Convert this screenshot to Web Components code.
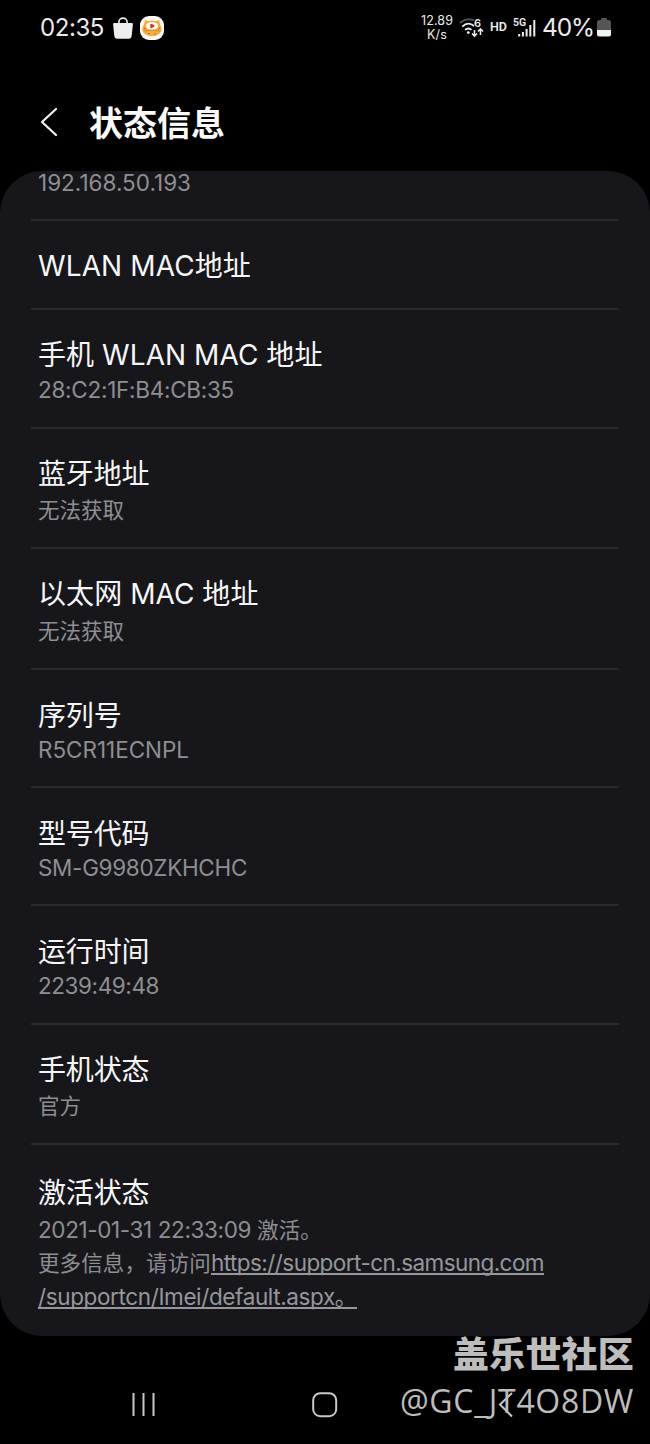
<!DOCTYPE html>
<html lang="zh-CN">
<head>
<meta charset="utf-8">
<title>状态信息</title>
<style>
html,body{margin:0;background:#000}
body{font-family:Inter,"Noto Sans CJK SC",sans-serif;color:#f6f6f8}
</style>
</head>
<body>
<status-screen></status-screen>
<script>
const define=(name,html,ready)=>customElements.define(name,class extends HTMLElement{
  connectedCallback(){
    if(this.shadowRoot)return;
    const t=document.createElement('template');
    t.innerHTML=html;
    this.attachShadow({mode:'open'}).append(t.content.cloneNode(true));
    if(ready)ready(this,this.shadowRoot);
  }
});

/* A run of text tracked out (or in) to the advance width given by its "w" attribute. */
define('fit-text',`<style>:host{display:inline-block;white-space:pre}</style><slot></slot>`,el=>{
  const w=+el.getAttribute('w');
  if(!w)return;
  const n=[...el.textContent].length;
  el.style.letterSpacing=((w-el.getBoundingClientRect().width)/n)+'px';
});

define('status-bar',`<style>
:host{display:flex;height:55px;box-sizing:border-box;padding:0 39px 0 40px;align-items:center;color:#ececec}
.time{font-size:24px;line-height:30px}
.bag{margin-left:9px}.app{margin-left:7px}
.space{flex:1}
.speed{font-size:12.5px;line-height:14px;text-align:center;display:flex;flex-direction:column;align-items:center;margin-right:7px}
.hd{font:600 12.500px/14px Roboto,sans-serif;margin:0 7px 0 5px;position:relative;top:-1px}
.pct{font-size:24.5px;line-height:30px;margin-left:5px;position:relative;top:-1px}
svg{display:block;flex:none;overflow:visible}
.bat{margin-left:3px}
</style>
<fit-text class="time" w="64">02:35</fit-text>
<svg class="bag" width="20" height="22" viewBox="0 0 20 22"><path d="M5.9 7V5.2a4.1 4.1 0 0 1 8.2 0V7" fill="none" stroke="#eee" stroke-width="1.6"/><path d="M1.2 6h17.6q1.2 0 1.1 1.2l-1.2 11.6q-.3 2.9-3.1 2.9H4.400q-2.800 0-3.100-2.900L.1 7.200Q0 6 1.200 6Z" fill="#eee"/></svg>
<svg class="app" width="24" height="24" viewBox="0 0 24 24"><rect width="24" height="24" rx="9" fill="#fffaf0"/><path d="M4 8.500 5 4l3.500 1.200Q12 3.800 15.500 5.200L19 4l1 4.500c2.800 4 2 7.500-1.500 9.800-4 2.500-9 2.500-13 0C2 16 1.200 12.500 4 8.500Z" fill="#f3ad45"/><ellipse cx="12" cy="10" rx="6" ry="4" fill="#fff8ed"/><path d="M10.300 7.800q3.500.3 4.500 2.200-1.500 2-4.500 2.200Z" fill="#b63b32"/><path d="M3.500 15q8.500-1.800 17 0" fill="none" stroke="#dc8a2c" stroke-width="1"/><path d="M4 12l1.500 1M20 12l-1.500 1M8 17.500h1.500M14.500 18H16" stroke="#a75a20" stroke-width="1"/></svg>
<span class="space"></span>
<div class="speed"><fit-text w="32">12.89</fit-text><fit-text w="20">K/s</fit-text></div>
<svg width="25" height="20" viewBox="0 0 25 20" fill="none"><path d="M0 5C4 1.200 9 .6 14 2.200" stroke="#555" stroke-width="1.900"/><path d="M2.200 8.600C6 5 10.500 5 14 8" stroke="#eee" stroke-width="1.800"/><path d="M5 11.900q3.500-2.700 6.500 0" stroke="#eee" stroke-width="1.800"/><circle cx="8.300" cy="14.600" r="1.400" fill="#eee"/><path d="M14.500 12v6M12 15.600l2.500 2.600 2.500-2.600M20.500 17v-6M18 13.400l2.500-2.600 2.500 2.600" stroke="#eee" stroke-width="1.500"/><text x="14" y="9" font-size="11" font-weight="600" fill="#eee">6</text></svg>
<fit-text class="hd" w="17">HD</fit-text>
<svg width="23" height="20" viewBox="0 0 23 20"><text x="-1" y="8" font-family="Roboto" font-size="10.500" font-weight="600" fill="#eee">5G</text><path d="M5.200 16v2.500M8.900 14v4.500M12.600 11v7.500M16.300 7v11.500M20.300 2v16.500" stroke="#eee" stroke-width="2"/></svg>
<fit-text class="pct" w="52">40%</fit-text>
<svg class="bat" width="14" height="19" viewBox="0 0 14 19"><path d="M4 2V1q0-1 1-1h4q1 0 1 1v1h1.500Q14 2 14 4.500V12H0V4.500Q0 2 2.500 2Z" fill="#555"/><path d="M0 12h14v4.500q0 2-2 2H2q-2 0-2-2Z" fill="#f2f2f2"/></svg>`);

define('title-bar',`<style>
:host{display:flex;align-items:center;height:116px;padding:0 0 0 40px;box-sizing:border-box}
svg{display:block;margin-bottom:-17px}
h1{margin:18px 0 0 31px;font:700 34px/44px "Noto Sans CJK SC",sans-serif;color:#fafafa}
</style>
<svg width="18" height="30" viewBox="0 0 18 30"><path d="M16 2 2 15l14 13" fill="none" stroke="#f4f4f4" stroke-width="2.200" stroke-linecap="round" stroke-linejoin="round"/></svg>
<h1><fit-text w="137"><slot></slot></fit-text></h1>`);

define('info-row',`<style>
:host{display:block;box-sizing:border-box;margin:0 31px;padding:var(--top,28px) 0 0 7px;height:var(--h);border-bottom:2px solid #29292d}
:host(:last-child){border:0}
.t{display:block;font-size:28px;line-height:34px;height:34px}
.s{display:block;font-size:22.500px;line-height:var(--lh,33.500px);color:#8e8e93;margin-top:var(--gap,1px)}
</style><div class="t"><slot name="title"></slot></div><div class="s"><slot></slot></div>`);

define('info-card',`<style>:host{display:block;height:1165px;background:#17171b;border-radius:42px;overflow:hidden}</style><slot></slot>`);

define('nav-bar',`<style>
:host{display:flex;height:108px;box-sizing:border-box;padding:56px 0 0 131px}
svg{display:block}
.home{margin-left:156px}.back{margin-left:160px}
</style>
<svg width="25" height="26" viewBox="0 0 25 26"><path d="M2.500 1v23M12.500 1v23M22.500 1v23" stroke="#c8c8c8" stroke-width="2"/></svg>
<svg class="home" width="26" height="26" viewBox="0 0 26 26"><rect x="1.200" y="1.200" width="23" height="23" rx="7" fill="none" stroke="#c8c8c8" stroke-width="2"/></svg>
<svg class="back" width="16" height="28" viewBox="0 0 16 28"><path d="M14 1 2 12.500l12 12" fill="none" stroke="#c8c8c8" stroke-width="2"/></svg>`);

define('community-mark',`<style>
:host{position:absolute;right:16px;top:1329px;display:flex;flex-direction:column;align-items:flex-end;color:#bdbdbd}
.n{font:900 36px/46px "Noto Sans CJK SC",sans-serif}
.u{font:400 32px/42px "Open Sans","Noto Sans",sans-serif;margin-top:5px}
</style><fit-text class="n" w="181">盖乐世社区</fit-text><fit-text class="u" w="234">@GC_JT4O8DW</fit-text>`);

define('status-screen',`<style>
:host{display:block;position:relative;width:650px;height:1444px;overflow:hidden;background:#000}
.c{font-size:21.500px}
a fit-text{color:#96969c;text-decoration:underline;text-decoration-thickness:1.500px;text-underline-offset:2px;text-decoration-skip-ink:none}
.l{display:block;height:33.500px;white-space:nowrap}
.l fit-text,.l a{line-height:33.500px}
</style>
<status-bar></status-bar>
<title-bar>状态信息</title-bar>
<info-card>
<info-row style="--h:50px;--top:0px;--gap:-34px;--lh:23.500px"><fit-text w="153">192.168.50.193</fit-text></info-row>
<info-row style="--h:89px"><fit-text slot="title" w="213">WLAN MAC地址</fit-text></info-row>
<info-row style="--h:119px"><fit-text slot="title" w="284.500">手机 WLAN MAC 地址</fit-text><fit-text w="196">28:C2:1F:B4:CB:35</fit-text></info-row>
<info-row style="--h:120px;--gap:2px"><fit-text slot="title" w="111.500">蓝牙地址</fit-text><fit-text class="c" w="86">无法获取</fit-text></info-row>
<info-row style="--h:121px;--gap:3px"><fit-text slot="title" w="220.500">以太网 MAC 地址</fit-text><fit-text class="c" w="86">无法获取</fit-text></info-row>
<info-row style="--h:118px;--top:28.500px;--gap:0px"><fit-text slot="title" w="83.500">序列号</fit-text><fit-text w="151">R5CR11ECNPL</fit-text></info-row>
<info-row style="--h:118px;--top:29px;--gap:0px"><fit-text slot="title" w="111.500">型号代码</fit-text><fit-text w="209">SM-G9980ZKHCHC</fit-text></info-row>
<info-row style="--h:119px;--top:29px;--gap:0px"><fit-text slot="title" w="111.500">运行时间</fit-text><fit-text w="121">2239:49:48</fit-text></info-row>
<info-row style="--h:120px;--gap:2px"><fit-text slot="title" w="111.500">手机状态</fit-text><fit-text class="c" w="43">官方</fit-text></info-row>
<info-row style="--h:190px;--top:31px;--gap:2.500px"><fit-text slot="title" w="111.500">激活状态</fit-text>
<div class="l"><fit-text w="219">2021-01-31 22:33:09 </fit-text><fit-text class="c" w="65">激活。</fit-text></div><div class="l"><fit-text class="c" w="173">更多信息，请访问</fit-text><a><fit-text w="333">https://support-cn.samsung.com</fit-text></a></div><div class="l"><a><fit-text w="319">/supportcn/Imei/default.aspx。</fit-text></a></div></info-row>
</info-card>
<nav-bar></nav-bar>
<community-mark></community-mark>`);
</script>
</body>
</html>
